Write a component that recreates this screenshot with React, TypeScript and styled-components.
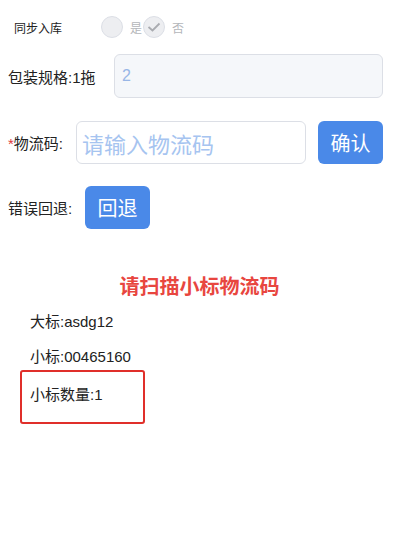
import { createGlobalStyle } from "styled-components";
import styled from "styled-components";

const GlobalStyle = createGlobalStyle`
  body {
    margin: 0;
    background: #ffffff;
    font-family: "Liberation Sans", "Noto Sans CJK SC", sans-serif;
    color: #222222;
  }
`;

export default function App() {
  return (
    <Root>
      <GlobalStyle />
      <SyncRow>
        <SmallLabel>同步入库</SmallLabel>
        <RadioGroup>
          <Radio />
          <RadioText tight>是</RadioText>
          <Radio>
            <svg width="14" height="10" viewBox="0 0 14 10">
              <polyline
                points="1.5,5 5.5,8.5 12.5,1.5"
                fill="none"
                stroke="#a9abb0"
                strokeWidth="1.8"
              />
            </svg>
          </Radio>
          <RadioText>否</RadioText>
        </RadioGroup>
      </SyncRow>

      <FormRow>
        <Label width={106}>包装规格:1拖</Label>
        <Field disabled>2</Field>
      </FormRow>

      <FormRow top={23}>
        <Label width={68}>
          <Star>*</Star>物流码:
        </Label>
        <Field big>请输入物流码</Field>
        <Button>确认</Button>
      </FormRow>

      <FormRow top={22}>
        <Label width={77}>错误回退:</Label>
        <Button>回退</Button>
      </FormRow>

      <Title>请扫描小标物流码</Title>

      <Info>大标:asdg12</Info>
      <Info top={15}>小标:00465160</Info>
      <CountBox>
        <Info>小标数量:1</Info>
      </CountBox>
    </Root>
  );
}

const Root = styled.div`
  padding: 0 17px 0 8px;
`;

const SyncRow = styled.div`
  display: flex;
  align-items: center;
  height: 54px;
  padding-left: 6px;
`;

const SmallLabel = styled.span`
  font-size: 12px;
  width: 87px;
`;

const RadioGroup = styled.div`
  display: flex;
  align-items: center;
  color: #b4b6ba;
  font-size: 12px;
`;

const Radio = styled.span`
  box-sizing: border-box;
  width: 22px;
  height: 22px;
  border-radius: 50%;
  background: #edeef1;
  border: 1px solid #dcdfe6;
  display: flex;
  align-items: center;
  justify-content: center;
`;

const RadioText = styled.span<{ tight?: boolean }>`
  margin-left: 7px;
  margin-right: ${(p) => (p.tight ? 1 : 7)}px;
`;

const FormRow = styled.div<{ top?: number }>`
  display: flex;
  align-items: center;
  margin-top: ${(p) => p.top ?? 0}px;
`;

const Label = styled.span<{ width: number }>`
  width: ${(p) => p.width}px;
  flex-shrink: 0;
  font-size: 15px;
`;

const Star = styled.span`
  color: #e03a3a;
`;

const Field = styled.div<{ disabled?: boolean; big?: boolean }>`
  box-sizing: border-box;
  flex: 1;
  height: ${(p) => (p.big ? 43 : 44)}px;
  display: flex;
  align-items: center;
  padding-left: ${(p) => (p.big ? 5 : 7)}px;
  border: 1px solid #dcdfe6;
  border-radius: 6px;
  background: ${(p) => (p.disabled ? "#f5f7fa" : "#ffffff")};
  color: ${(p) => (p.big ? "#a6c4f0" : "#98b6e6")};
  font-size: ${(p) => (p.big ? 22 : 16)}px;
`;

const Button = styled.div`
  box-sizing: border-box;
  width: 65px;
  height: 43px;
  margin-left: 12px;
  border-radius: 6px;
  background: #4a89e8;
  color: #ffffff;
  font-size: 20px;
  display: flex;
  align-items: center;
  justify-content: center;
  ${Label} + & {
    margin-left: 0;
  }
`;

const Title = styled.div`
  margin-top: 45px;
  text-align: center;
  line-height: 26px;
  font-size: 20px;
  font-weight: bold;
  color: #e8463f;
  padding-left: 8px;
`;

const Info = styled.div<{ top?: number }>`
  margin-top: ${(p) => p.top ?? 12}px;
  margin-left: 22px;
  font-size: 15px;
  line-height: 20px;
`;

const CountBox = styled.div`
  box-sizing: border-box;
  width: 125px;
  height: 54px;
  margin: 3px 0 0 12px;
  border: 2px solid #e02f2a;
  border-radius: 3px;
  padding-top: 1px;

  ${Info} {
    margin-left: 8px;
  }
`;
